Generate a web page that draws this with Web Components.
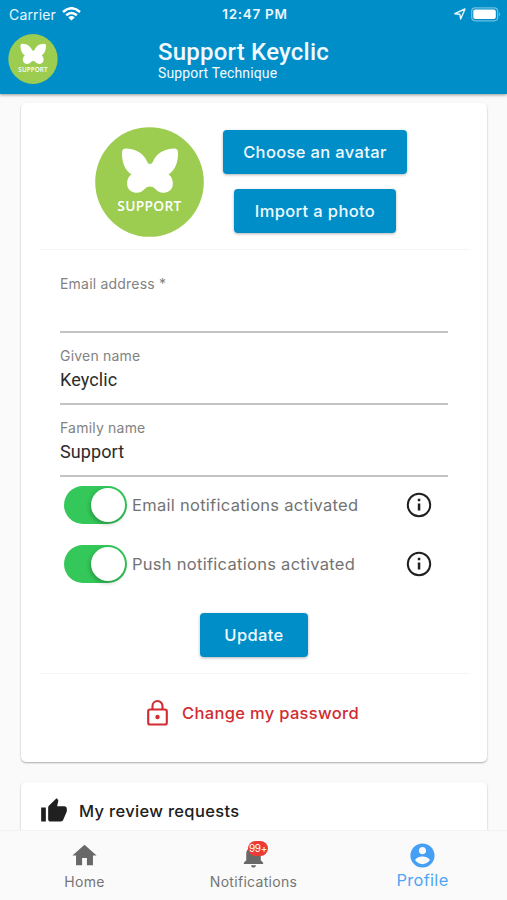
<!DOCTYPE html>
<html lang="en">
<head>
<meta charset="utf-8">
<title>Profile</title>
<style>
html,body{margin:0;height:100%}
body{background:#fafafa;font-family:Inter,"Liberation Sans",sans-serif;overflow:hidden}
</style>
</head>
<body>
<profile-app></profile-app>
<script>
const define = (name, html) => {
  const t = document.createElement('template');
  t.innerHTML = '<style>*{box-sizing:border-box}svg{display:block}</style>' + html;
  customElements.define(name, class extends HTMLElement {
    constructor() {
      super();
      this.attachShadow({mode: 'open'}).append(t.content.cloneNode(true));
    }
  });
};

define('brand-avatar', `
<style>:host{display:block;flex:none;width:109px;height:110px}svg{width:100%;height:100%}</style>
<svg viewBox="0 0 109 110">
  <ellipse cx="54.5" cy="55" rx="54.3" ry="54.8" fill="#9ccc50"/>
  <path fill="#fff" d="M55 37Q53 37 52 34.500C49 27.500 42 22 31.700 21.600C28 21.500 26.800 23.500 26.900 26.500C27.200 36 30 43 36.500 47.500C32.500 50 31.500 55 32.500 59.500C34 65 41 67.500 46.700 64.500C49.500 63 50.500 59.500 55 59.500C59.500 59.500 60.500 63 63.300 64.500C69 67.500 76 65 77.500 59.500C78.500 55 77.500 50 73.500 47.500C80 43 82.800 36 83.100 26.500C83.200 23.500 82 21.500 78.300 21.600C68 22 61 27.500 58 34.500Q57 37 55 37Z"/>
  <text x="54.300" y="84" text-anchor="middle" textLength="64" font-family="Open Sans" font-weight="600" font-size="13.800" fill="#fff">SUPPORT</text>
</svg>`);

define('status-bar', `
<style>
:host{display:grid;grid-template-columns:1fr auto 1fr;align-items:center;height:28px;padding:0 6px 0 9px;color:#e9f7fd;font-size:14px}
.l,.r{display:flex;align-items:center}.l{gap:6px;letter-spacing:.15px}.r{justify-content:flex-end;gap:5px}
b{font-weight:600;font-size:13.500px;letter-spacing:.7px}
</style>
<div class="l"><span>Carrier</span>
<svg width="19" height="14" viewBox="0 0 19 14" fill="none" stroke="#fff" stroke-width="2.500"><path d="M1 5Q9.500-2.500 18 5M4.200 8.300Q9.500 3.600 14.800 8.300"/><path fill="#fff" stroke="none" d="M6.300 10.400Q9.500 7.800 12.700 10.400L9.500 13.600Z"/></svg></div>
<b>12:47 PM</b>
<div class="r">
<svg width="12" height="12" viewBox="0 0 12 12" fill="none" stroke="#e9f7fd" stroke-width="1.400" stroke-linejoin="round"><path d="M.8 5.700L11 1L6.700 11L5.800 6.300Z"/></svg>
<svg width="30" height="15" viewBox="0 0 30 15"><rect x=".7" y=".8" width="26" height="13" rx="3.500" fill="none" stroke="#6fbfe2" stroke-width="1.200"/><rect x="2.300" y="2.500" width="22.500" height="9.600" rx="2" fill="#fff"/><path d="M28 5Q30 7.300 28 9.600Z" fill="#6fbfe2"/></svg>
</div>`);

define('app-header', `
<style>
:host{display:block;flex:none;height:94px;background:#008ec9;color:#f1faff;box-shadow:0 1px 3px rgba(0,0,0,.4);z-index:1}
.row{display:flex;padding:6px 8px 0}
brand-avatar{width:50px;height:50px}
.t{margin-left:100px;padding-top:4px;font-family:Roboto,sans-serif}
h1{margin:0;font-size:24px;line-height:28px;font-weight:500;letter-spacing:.2px;white-space:nowrap}
p{margin:-1px 0 0;font-size:14px;line-height:16px;letter-spacing:.13px}
</style>
<status-bar></status-bar>
<div class="row"><brand-avatar></brand-avatar><div class="t"><h1><slot name="title"></slot></h1><p><slot name="subtitle"></slot></p></div></div>`);

define('app-button', `
<style>:host{display:flex;align-items:center;justify-content:center;height:44px;border-radius:4px;background:#008ec9;color:#eefaff;font-size:16.500px;font-weight:500;letter-spacing:.36px;white-space:nowrap;box-shadow:0 1px 3px rgba(0,0,0,.3)}</style><slot></slot>`);

define('surface-card', `
<style>:host{display:block;background:#fff;border-radius:5px;box-shadow:0 1px 2px rgba(0,0,0,.32);flex:none}</style><slot></slot>`);

define('text-field', `
<style>
:host{display:block;height:72px;border-bottom:2px solid #c4c4c4;margin:0 39px;padding-top:14px}
.label{font-size:14px;line-height:18px;color:#828282;letter-spacing:.2px}
.value{font:18px/22px Roboto,sans-serif;color:#2b2b2b;margin-top:4px;letter-spacing:.1px}
</style><div class="label"><slot name="label"></slot></div><div class="value"><slot></slot></div>`);

define('switch-row', `
<style>
:host{display:flex;align-items:center;height:38px;margin:0 55px 0 43px;color:#737373;font-size:16.500px}
.sw{flex:none;width:63px;height:38px;border-radius:19px;background:#34c759;padding:2px;display:flex;justify-content:flex-end}
.k{width:34px;height:34px;border-radius:50%;background:#fff;box-shadow:-1px 2px 4px rgba(0,0,0,.25)}
.label{flex:1;margin-left:5px;letter-spacing:.28px;white-space:nowrap;margin-top:-1px}
</style>
<div class="sw"><div class="k"></div></div><div class="label"><slot></slot></div>
<svg width="26" height="26" viewBox="0 0 26 26"><circle cx="13" cy="13" r="11.200" fill="none" stroke="#202020" stroke-width="2"/><path fill="#202020" d="M11.800 6.800h2.500v2.400h-2.500zM11.800 11.500h2.500v7h-2.500z"/></svg>`);

define('profile-form', `
<style>
.top{display:flex;height:146px;padding:24px 0 0 74px;gap:19px}
.btns{display:flex;flex-direction:column;align-items:center;gap:15px;padding-top:3px}
.a{width:184px}.b{width:162px}
hr{border:0;height:1px;background:#f4f4f4;margin:0 18px}
.fields{padding-top:11px}
switch-row{margin-top:9px}switch-row+switch-row{margin-top:21px}
.upd{width:108px;margin:30px auto 16px 179px}
.pw{display:flex;align-items:center;gap:14px;padding:25px 0 0 126px;color:#d02c31;font-size:16.500px;font-weight:500;letter-spacing:.33px;white-space:nowrap}
</style>
<div class="top"><brand-avatar></brand-avatar><div class="btns"><app-button class="a">Choose an avatar</app-button><app-button class="b">Import a photo</app-button></div></div>
<hr>
<div class="fields">
<text-field><span slot="label">Email address *</span></text-field>
<text-field><span slot="label">Given name</span>Keyclic</text-field>
<text-field><span slot="label">Family name</span>Support</text-field>
</div>
<switch-row>Email notifications activated</switch-row>
<switch-row>Push notifications activated</switch-row>
<app-button class="upd">Update</app-button>
<hr>
<div class="pw"><svg width="21" height="28" viewBox="0 0 21 28" fill="none" stroke="#d02c31" stroke-width="2.100"><rect x="1.200" y="10.500" width="18.600" height="15" rx="1.800"/><path d="M5.500 10.500V7a5 5 0 0 1 10 0V10.500"/><circle cx="10.500" cy="18" r="2.200" fill="#d02c31" stroke="none"/></svg><span>Change my password</span></div>`);

define('review-link', `
<style>:host{display:flex;align-items:center;gap:11px;padding:15px 19px;color:#202020;font-size:16.500px;font-weight:500;letter-spacing:.33px;height:58px}</style>
<svg width="28" height="28" viewBox="0 0 24 24" fill="#202020"><path d="M1 21h4V9H1v12zm22-11c0-1.100-.9-2-2-2h-6.310l.95-4.570.03-.32c0-.41-.17-.79-.44-1.060L14.170 1 7.590 7.590C7.220 7.950 7 8.450 7 9v10c0 1.100.9 2 2 2h9c.83 0 1.540-.5 1.840-1.220l3.020-7.050c.09-.23.14-.47.14-.73v-2z"/></svg><span><slot></slot></span>`);

define('nav-item', `
<style>
:host{flex:1;display:flex;flex-direction:column;align-items:center;padding-top:10px;color:#757575;font-size:14px;letter-spacing:.3px}
:host([active]){color:#51a5f6;font-size:16.500px}
.i{position:relative;height:30px}
.l{line-height:20px;margin-top:1px}:host([active]) .l{margin-top:-1px}
</style><div class="i"><slot name="icon"></slot><slot name="badge"></slot></div><div class="l"><slot></slot></div>`);

define('count-badge', `
<style>:host{position:absolute;left:9px;top:0;width:20px;height:15px;border-radius:8px;background:#eb3b34;color:#fff;font-size:10px;line-height:15px;text-align:center;letter-spacing:-.3px}</style><slot></slot>`);

define('nav-bar', `
<style>
:host{display:flex;flex:none;height:69px;background:#fafafa;box-shadow:0 -1px 0 #f2f2f2;z-index:1}
</style>
<nav-item><svg slot="icon" width="29" height="29" viewBox="0 0 24 24" fill="#686868"><path d="M10 20v-6h4v6h5v-8h3L12 3 2 12h3v8z"/></svg>Home</nav-item>
<nav-item><svg slot="icon" width="29" height="29" viewBox="0 0 24 24" fill="#686868"><path d="M12 22c1.100 0 2-.9 2-2h-4c0 1.100.9 2 2 2zm6-6v-5c0-3.070-1.640-5.640-4.500-6.320V4c0-.83-.67-1.500-1.500-1.500s-1.500.67-1.500 1.500v.68C7.630 5.360 6 7.920 6 11v5l-2 2v1h16v-1l-2-2z"/></svg><count-badge slot="badge">99+</count-badge>Notifications</nav-item>
<nav-item active><svg slot="icon" width="29" height="29" viewBox="0 0 24 24" fill="#459ff5"><path d="M12 2C6.480 2 2 6.480 2 12s4.480 10 10 10 10-4.480 10-10S17.520 2 12 2zm0 3c1.660 0 3 1.340 3 3s-1.340 3-3 3-3-1.340-3-3 1.340-3 3-3zm0 14.200c-2.500 0-4.710-1.280-6-3.220.03-1.990 4-3.080 6-3.080 1.990 0 5.970 1.090 6 3.080-1.290 1.940-3.500 3.220-6 3.220z"/></svg>Profile</nav-item>`);

define('profile-app', `
<style>
:host{display:flex;flex-direction:column;height:900px;width:507px;overflow:hidden}
main{flex:1;min-height:0;overflow:hidden;padding:9px 20px 0 21px;display:flex;flex-direction:column;gap:20px}
.card{height:659px}.rev{height:80px}
</style>
<app-header><span slot="title">Support Keyclic</span><span slot="subtitle">Support Technique</span></app-header>
<main>
<surface-card class="card"><profile-form></profile-form></surface-card>
<surface-card class="rev"><review-link>My review requests</review-link></surface-card>
</main>
<nav-bar></nav-bar>`);
</script>
</body>
</html>
